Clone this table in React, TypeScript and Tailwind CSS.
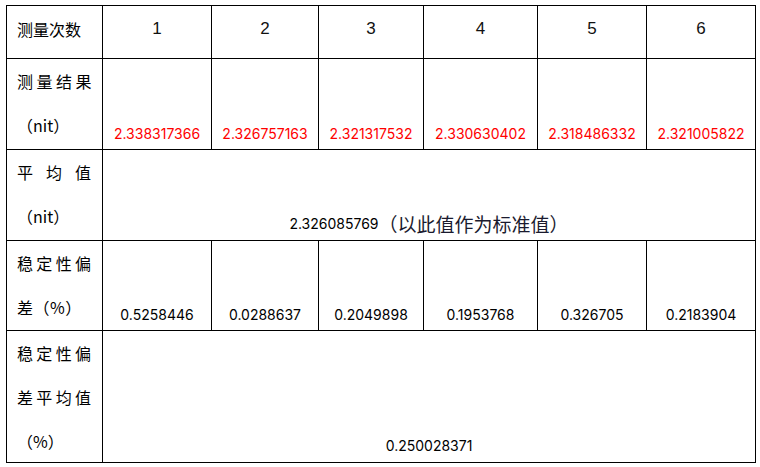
import React from 'react';

const cjk = "font-['Noto_Sans_CJK_SC','Noto_Sans',sans-serif]";
const num = "font-['Inter','Noto_Sans_CJK_SC',sans-serif]";

const results = ['2.338317366', '2.326757163', '2.321317532', '2.330630402', '2.318486332', '2.321005822'];
const deviations = ['0.5258446', '0.0288637', '0.2049898', '0.1953768', '0.326705', '0.2183904'];

// each line is either spaced out char by char (gap) or printed as is
type Line = { text: string; gap?: string };

const Label: React.FC<{ lines: Line[] }> = ({ lines }) => (
  <div className={`bg-white pl-[10px] text-[16px] leading-[44px] text-black whitespace-nowrap ${cjk}`}>
    {lines.map((l, i) =>
      l.gap ? (
        <div key={i} className={`flex ${l.gap}`}>
          {Array.from(l.text).map((c, j) => <span key={j}>{c}</span>)}
        </div>
      ) : (
        <div key={i}>{l.text}</div>
      )
    )}
  </div>
);

const App: React.FC = () => {
  return (
    <div className="w-[760px] h-[467px] bg-white pt-[5px] pl-[6px]">
      <div className="grid w-[750px] grid-cols-[95px_108px_106px_104px_113px_108px_108px] grid-rows-[52px_90px_90px_89px_131px] gap-px bg-black p-px">
        {/* header */}
        <div className={`bg-white pl-[10px] pb-[6px] flex items-center text-[16px] text-black ${cjk}`}>测量次数</div>
        {[1, 2, 3, 4, 5, 6].map(n => (
          <div key={n} className="bg-white pb-[6px] flex items-center justify-center font-['Liberation_Sans',sans-serif] text-[17px] text-[#111]">
            {n}
          </div>
        ))}

        {/* results */}
        <Label lines={[{ text: '测量结果', gap: 'gap-[3.5px]' }, { text: '（nit）' }]} />
        {results.map(v => (
          <div key={v} className={`bg-white flex items-end justify-center pb-[5px] text-[14px] leading-[20px] text-[#ff0000] ${num}`}>
            {v}
          </div>
        ))}

        {/* average */}
        <Label lines={[{ text: '平均值', gap: 'gap-[13px]' }, { text: '（nit）' }]} />
        <div className="col-span-6 bg-white flex items-end justify-center pb-[5px] leading-[22px] text-black">
          <span className={`${num} text-[14px]`}>2.326085769</span>
          <span className={`${cjk} text-[19px] text-[#1a1a2e]`}>（以此值作为标准值）</span>
        </div>

        {/* deviation */}
        <Label lines={[{ text: '稳定性偏', gap: 'gap-[3.3px]' }, { text: '差（%）', gap: 'gap-[0.5px]' }]} />
        {deviations.map(v => (
          <div key={v} className={`bg-white flex items-end justify-center pb-[5px] text-[14px] leading-[20px] text-black ${num}`}>
            {v}
          </div>
        ))}

        {/* deviation average */}
        <Label lines={[{ text: '稳定性偏', gap: 'gap-[3.3px]' }, { text: '差平均值', gap: 'gap-[3.3px]' }, { text: '（%）' }]} />
        <div className={`col-span-6 bg-white flex items-end justify-center pb-[6px] text-[14px] leading-[20px] text-black ${num}`}>
          0.250028371
        </div>
      </div>
    </div>
  );
};

export default App;
